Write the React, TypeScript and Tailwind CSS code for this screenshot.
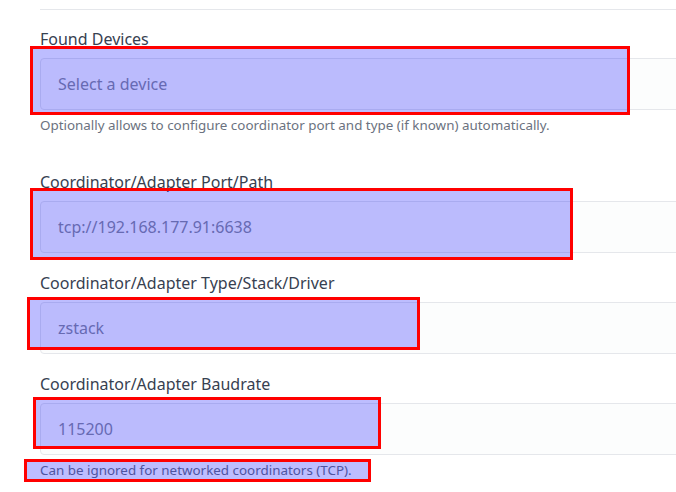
const fields = [
  { label: 'Found Devices', placeholder: 'Select a device', help: 'Optionally allows to configure coordinator port and type (if known) automatically.' },
  { label: 'Coordinator/Adapter Port/Path', placeholder: 'tcp://192.168.177.91:6638' },
  { label: 'Coordinator/Adapter Type/Stack/Driver', placeholder: 'zstack' },
  { label: 'Coordinator/Adapter Baudrate', placeholder: '115200', help: 'Can be ignored for networked coordinators (TCP).' },
]

// highlight boxes drawn over the form
const marks = [
  'left-[30px] top-[46px] w-[600px] h-[69px]',
  'left-[30px] top-[188px] w-[543px] h-[72px]',
  'left-[27px] top-[297px] w-[393px] h-[53px]',
  'left-[33px] top-[397px] w-[348px] h-[52px]',
  'left-[24px] top-[459px] w-[347px] h-[23px]',
]

export default function App() {
  return (
    <div
      className="relative w-[676px] h-[492px] overflow-hidden bg-white"
      style={{ fontFamily: '"Noto Sans", "Open Sans", sans-serif' }}
    >
      <div className="ml-10 w-[680px] pt-[9px]">
        <div className="border-t border-[#e5e7eb]" />
        <div className="flex flex-col pt-[17px]">
          {fields.map((f, i) => (
            <div key={f.label} className={i === 0 ? 'mb-[37px]' : 'mb-[18px]'}>
              <label className="block h-6 leading-6 text-[16px] text-[#374151] mb-[7px]">{f.label}</label>
              <div className="h-[52px] flex items-center px-[17px] rounded border border-[#e5e7eb] bg-[#fcfdfd] text-[16px] text-[#8b8f98]">
                {f.placeholder}
              </div>
              {f.help && (
                <p className="mt-[7px] text-[13.4px] leading-4 text-[#6b7280]">{f.help}</p>
              )}
            </div>
          ))}
        </div>
      </div>
      {marks.map((m) => (
        <div key={m} className={`absolute ${m} border-[3px] border-[#ff0000] bg-[rgba(0,0,255,0.26)]`} />
      ))}
    </div>
  )
}
